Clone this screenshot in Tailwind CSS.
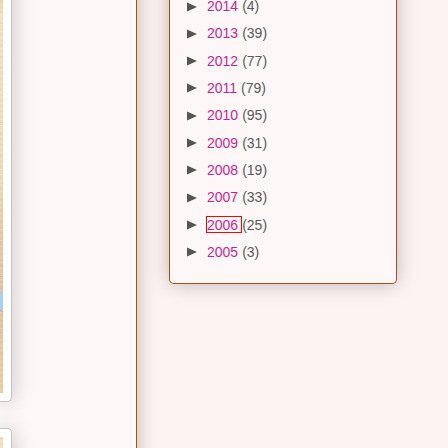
<!DOCTYPE html>
<html lang="en">
<head>
<meta charset="utf-8">
<meta name="viewport" content="width=device-width, initial-scale=1">
<title>Blog archive</title>
<script src="https://cdn.jsdelivr.net/npm/@tailwindcss/browser@4"></script>
</head>
<body class="bg-[#fdf3f1] font-['Liberation_Sans',Arial,sans-serif] text-[14px] text-[#5a5a5a]">
<div class="flex h-screen items-start overflow-hidden">
  <main class="-mt-6 -mb-6 flex w-[137px] shrink-0 flex-col gap-[26px] self-stretch overflow-hidden border-r border-[#a8500f] bg-[#fdf7f7] shadow-[0_0_20px_rgba(0,0,0,0.25)]">
    <figure class="w-3 shrink-0 rounded-br-[5px] border-r border-b border-[#c4c4c4] bg-white pt-6 pb-2 shadow-[0_0_20px_rgba(0,0,0,0.25)]">
      <svg class="block" width="3" height="393" viewBox="0 0 3 393" role="img" aria-label="Photo">
        <defs>
          <linearGradient id="wood" x1="0" y1="0" x2="0" y2="1">
            <stop offset="0" stop-color="#f1d3ae"/><stop offset=".04" stop-color="#f5e0bd"/><stop offset=".45" stop-color="#f0d9b4"/><stop offset=".6" stop-color="#e5c6a0"/><stop offset=".8" stop-color="#e4c199"/><stop offset="1" stop-color="#eccda2"/>
          </linearGradient>
          <pattern id="grain" width="3" height="11" patternUnits="userSpaceOnUse">
            <path d="M0 1.5H3M1 7.5H3" stroke="#d9b27f" stroke-opacity=".25"/><path d="M0 4.5H2M0 9.5H3" stroke="#fff3d9" stroke-opacity=".3"/>
          </pattern>
        </defs>
        <path fill="url(#wood)" d="M0 0H3V393H0Z"/><path fill="url(#grain)" d="M0 0H3V393H0Z"/>
        <path fill="#a4cff6" d="M3 285V312L0 310V297Z"/><path d="M0 310 3 312" stroke="#d6a4a0" fill="none"/>
      </svg>
    </figure>
    <figure class="w-3 grow rounded-tr-[5px] border-t border-r border-[#c4c4c4] bg-white pt-2 shadow-[0_0_20px_rgba(0,0,0,0.25)]">
      <svg class="block" width="3" height="40" viewBox="0 0 3 40" role="img" aria-label="Photo">
        <path fill="#f5dfb8" d="M0 0H3V40H0Z"/><path fill="url(#grain)" d="M0 0H3V40H0Z"/>
      </svg>
    </figure>
  </main>
  <aside class="-mt-6 mr-[51px] ml-8 min-w-0 grow rounded-b-[5px] border-x border-b border-[#a0501e] bg-[#fdf7f7] pt-4 pb-[18px] pl-[17px] shadow-[0_0_20px_rgba(0,0,0,0.25)]">
    <svg class="hidden" aria-hidden="true"><defs><path id="arrow" d="M0 .4 10 5 0 9.6Z"/></defs></svg>
    <ul class="flex min-h-[273px] flex-col justify-between">
      <li class="flex h-[27px] items-center"><button class="mr-[10px] pt-[2px]" aria-label="Expand 2014"><svg class="block" width="10" height="10" fill="#555"><use href="#arrow"/></svg></button><a href="#2014" class="mr-px pt-[2px] pr-[3px] leading-[13px] text-[#c71f95]">2014</a><span class="pt-[2px] leading-[13px]">(4)</span></li>
      <li class="flex h-[27px] items-center"><button class="mr-[10px] pt-[2px]" aria-label="Expand 2013"><svg class="block" width="10" height="10" fill="#555"><use href="#arrow"/></svg></button><a href="#2013" class="mr-px pt-[2px] pr-[3px] leading-[13px] text-[#c71f95]">2013</a><span class="pt-[2px] leading-[13px]">(39)</span></li>
      <li class="flex h-[27px] items-center"><button class="mr-[10px] pt-[2px]" aria-label="Expand 2012"><svg class="block" width="10" height="10" fill="#555"><use href="#arrow"/></svg></button><a href="#2012" class="mr-px pt-[2px] pr-[3px] leading-[13px] text-[#c71f95]">2012</a><span class="pt-[2px] leading-[13px]">(77)</span></li>
      <li class="flex h-[27px] items-center"><button class="mr-[10px] pt-[2px]" aria-label="Expand 2011"><svg class="block" width="10" height="10" fill="#555"><use href="#arrow"/></svg></button><a href="#2011" class="mr-px pt-[2px] pr-[3px] leading-[13px] text-[#c71f95]">2011</a><span class="pt-[2px] leading-[13px]">(79)</span></li>
      <li class="flex h-[27px] items-center"><button class="mr-[10px] pt-[2px]" aria-label="Expand 2010"><svg class="block" width="10" height="10" fill="#555"><use href="#arrow"/></svg></button><a href="#2010" class="mr-px pt-[2px] pr-[3px] leading-[13px] text-[#c71f95]">2010</a><span class="pt-[2px] leading-[13px]">(95)</span></li>
      <li class="flex h-[27px] items-center"><button class="mr-[10px] pt-[2px]" aria-label="Expand 2009"><svg class="block" width="10" height="10" fill="#555"><use href="#arrow"/></svg></button><a href="#2009" class="mr-px pt-[2px] pr-[3px] leading-[13px] text-[#c71f95]">2009</a><span class="pt-[2px] leading-[13px]">(31)</span></li>
      <li class="flex h-[27px] items-center"><button class="mr-[10px] pt-[2px]" aria-label="Expand 2008"><svg class="block" width="10" height="10" fill="#555"><use href="#arrow"/></svg></button><a href="#2008" class="mr-px pt-[2px] pr-[3px] leading-[13px] text-[#c71f95]">2008</a><span class="pt-[2px] leading-[13px]">(19)</span></li>
      <li class="flex h-[27px] items-center"><button class="mr-[10px] pt-[2px]" aria-label="Expand 2007"><svg class="block" width="10" height="10" fill="#555"><use href="#arrow"/></svg></button><a href="#2007" class="mr-px pt-[2px] pr-[3px] leading-[13px] text-[#c71f95]">2007</a><span class="pt-[2px] leading-[13px]">(33)</span></li>
      <li class="flex h-[27px] items-center"><button class="mr-[10px] pt-[2px]" aria-label="Expand 2006"><svg class="block" width="10" height="10" fill="#555"><use href="#arrow"/></svg></button><a href="#2006" class="mr-px pt-[2px] pr-[3px] leading-[13px] text-[#c71f95] outline-1 outline-[#ff0000]">2006</a><span class="pt-[2px] leading-[13px]">(25)</span></li>
      <li class="flex h-[27px] items-center"><button class="mr-[10px] pt-[2px]" aria-label="Expand 2005"><svg class="block" width="10" height="10" fill="#555"><use href="#arrow"/></svg></button><a href="#2005" class="mr-px pt-[2px] pr-[3px] leading-[13px] text-[#c71f95]">2005</a><span class="pt-[2px] leading-[13px]">(3)</span></li>
    </ul>
  </aside>
</div>
</body>
</html>
